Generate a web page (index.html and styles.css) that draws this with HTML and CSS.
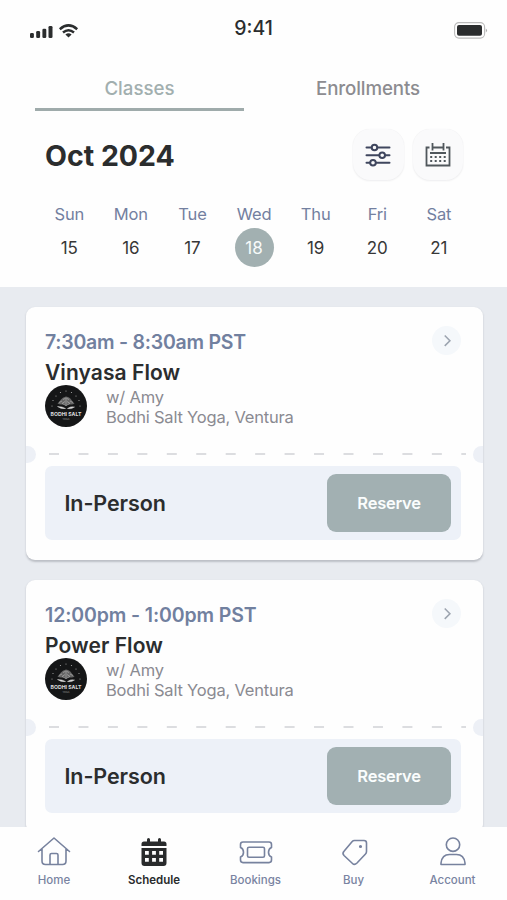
FILE: index.html
```html
<!DOCTYPE html>
<html lang="en">
<head>
<meta charset="utf-8">
<title>Schedule</title>
<link rel="stylesheet" href="styles.css">
</head>
<body>
<svg class="defs" width="0" height="0" aria-hidden="true">
  <symbol id="tree" viewBox="0 0 42 42">
    <g fill="#aaa">
      <circle cx="7" cy="21" r=".6"/><circle cx="8" cy="15.500" r=".6"/><circle cx="11" cy="11" r=".6"/><circle cx="15.500" cy="7.500" r=".6"/><circle cx="21" cy="6" r=".6"/><circle cx="26.500" cy="7.500" r=".6"/><circle cx="31" cy="11" r=".6"/><circle cx="34" cy="15.500" r=".6"/><circle cx="35" cy="21" r=".6"/>
    </g>
    <path d="M12.500 18.500q2-2 3-3.500 2-3 5.500-3.500 4 .5 5.500 3.500 1 1.500 3 3.500-2 1.500-5 .7-3 1-6.500 0-3 1-5.500-.7z" fill="#666"/>
    <path d="M14 17.500l3-1.500m0 2.500l3-2m-2-2l3-1.500 3 1.500m-2 2l3 2m0-2.500l3 1.500M21 14v7m-4-2.500l4 2 4-2" fill="none" stroke="#aaa" stroke-width=".7"/>
    <path d="M12.500 21.500q5 0 8 2-4 1-8-2zM29.500 22q-4-1-7 1.500 4 1 7-1.500z" fill="#ddd" stroke="#ccc" stroke-width=".5"/>
  </symbol>
  <symbol id="chevron" viewBox="0 0 28 28"><path d="M12.300 9.200l5 5-5 5" fill="none" stroke="#9da5b0" stroke-width="1.500"/></symbol>
</svg>
<div class="app">
  <header class="status">
    <div class="signal">
      <svg width="24" height="14" viewBox="0 0 24 14" fill="#2b2d2e"><rect x="0" y="9" width="3.900" height="5" rx="1.300"/><rect x="6.200" y="7" width="3.900" height="7" rx="1.300"/><rect x="12.400" y="4.700" width="3.900" height="9.300" rx="1.300"/><rect x="18.500" y="2" width="4" height="12" rx="1.300"/></svg>
      <svg width="20" height="14" viewBox="0 0 20 14"><path d="M.8 5.200Q9.500-2.400 18.200 5.200M4 8.500q5.500-4.600 11 0" fill="none" stroke="#2b2d2e" stroke-width="2.500"/><path d="M6.400 10.500q3.100-2.400 6.200 0L9.500 13.600z" fill="#2b2d2e"/></svg>
    </div>
    <div class="clock">9:41</div>
    <svg class="battery" width="34" height="17" viewBox="0 0 34 17"><rect x=".6" y=".6" width="30" height="15.500" rx="4.300" fill="#fff" stroke="#bbb" stroke-width="1.100"/><rect x="3" y="3" width="25" height="10.800" rx="2" fill="#2b2d2e"/><path d="M31.800 6.500q2.500 1.900 0 4z" fill="#aaa"/></svg>
  </header>
  <nav class="tabs"><div class="tab active">Classes</div><div class="tab">Enrollments</div></nav>
  <div class="month">
    <h1>Oct 2024</h1>
    <button class="tool" aria-label="Filter"><svg width="26" height="26" viewBox="0 0 26 26" fill="none" stroke="#3f465e" stroke-width="2" stroke-linecap="round"><path d="M1.500 5.500h5m6 0h12M1.500 13.200h12.500m6 0h4.500M1.500 20.800h3.500m6 0h13.500"/><circle cx="9.500" cy="5.500" r="2.800"/><circle cx="17.200" cy="13.200" r="2.800"/><circle cx="8" cy="20.800" r="2.800"/></svg></button>
    <button class="tool" aria-label="Calendar"><svg width="26" height="26" viewBox="0 0 26 26" fill="none" stroke="#50575c"><path d="M4.500 5.500H1.500v18h23V5.500h-3.500M7.500 5.500h11" stroke-width="1.800"/><path d="M7.500 1v7.500m11-7.500v7.500M5 11h16" stroke-width="1.800"/><path d="M5.200 15h16M5.200 19h16" stroke-width="2" stroke-dasharray="2 2.500"/></svg></button>
  </div>
  <div class="week">
    <div class="day"><span>Sun</span><b>15</b></div><div class="day"><span>Mon</span><b>16</b></div><div class="day"><span>Tue</span><b>17</b></div><div class="day selected"><span>Wed</span><b>18</b></div><div class="day"><span>Thu</span><b>19</b></div><div class="day"><span>Fri</span><b>20</b></div><div class="day"><span>Sat</span><b>21</b></div>
  </div>
  <main class="list">
    <article class="card">
      <div class="top"><div class="time long">7:30am - 8:30am PST</div><svg class="more" width="29" height="29"><use href="#chevron"/></svg></div>
      <h2>Vinyasa Flow</h2>
      <div class="host"><div class="avatar"><svg width="42" height="42"><use href="#tree"/><text x="21" y="31" class="brand">BODHI SALT</text><text x="21" y="35" class="sub">YOGA</text></svg></div><div class="meta"><p>w/ Amy</p><p>Bodhi Salt Yoga, Ventura</p></div></div>
      <div class="tear"><i></i><svg width="423" height="2"><path d="M6 1H423" stroke="#dcdde0" stroke-width="2" stroke-dasharray="10 19.450"/></svg><i></i></div>
      <div class="book"><strong>In-Person</strong><button>Reserve</button></div>
    </article>
    <article class="card">
      <div class="top"><div class="time">12:00pm - 1:00pm PST</div><svg class="more" width="29" height="29"><use href="#chevron"/></svg></div>
      <h2>Power Flow</h2>
      <div class="host"><div class="avatar"><svg width="42" height="42"><use href="#tree"/><text x="21" y="31" class="brand">BODHI SALT</text><text x="21" y="35" class="sub">YOGA</text></svg></div><div class="meta"><p>w/ Amy</p><p>Bodhi Salt Yoga, Ventura</p></div></div>
      <div class="tear"><i></i><svg width="423" height="2"><path d="M6 1H423" stroke="#dcdde0" stroke-width="2" stroke-dasharray="10 19.450"/></svg><i></i></div>
      <div class="book"><strong>In-Person</strong><button>Reserve</button></div>
    </article>
  </main>
  <nav class="bottom">
    <a><svg viewBox="0 0 34 32"><path d="M1.500 15.500L17 2l15.500 13.500M5 13v12q0 3.500 3.500 3.500h17q3.500 0 3.500-3.500V13M13 28.500V19q0-1.500 1.500-1.500h5q1.500 0 1.500 1.500v9.500"/></svg><span>Home</span></a>
    <a class="on"><svg viewBox="0 0 34 32"><path d="M4.500 10V8Q4.500 5.500 7 5.500H10V3.500q0-1.500 1.500-1.500T13 3.500V5.500h8V3.500Q21 2 22.500 2T24 3.500V5.500h3Q29.500 5.500 29.500 8V10z"/><path fill-rule="evenodd" d="M4.500 12h25v15q0 3-3 3H7.500q-3 0-3-3zM8 15v3.800H11.800V15zm7.100 0v3.800H18.900V15zm7.100 0v3.800H26V15zm-14.200 7v3.800H11.800V22zm7.100 0v3.800H18.900V22zm7.100 0v3.800H26V22z"/></svg><span>Schedule</span></a>
    <a><svg viewBox="0 0 34 32"><path d="M4 6h26q2.500 0 2.500 2.500v3q-3 1.200-3 4.800t3 4.800v3q0 2.500-2.500 2.500H4q-2.500 0-2.500-2.500v-3q3-1.200 3-4.800t-3-4.800v-3Q1.500 6 4 6z"/><rect x="8.500" y="11.300" width="17" height="10" rx="1.500"/></svg><span>Bookings</span></a>
    <a><svg viewBox="0 0 34 32"><path d="M17.500 4.500h9.500Q29.500 4.500 29.500 7v8.500q0 1.500-1 2.500l-8.500 9q-2.500 2.500-4.500 .5l-8.500-8q-2-2 0-4.200L15 5.700q1-1.200 2.500-1.200z"/><circle cx="23.500" cy="10.500" r=".8"/></svg><span>Buy</span></a>
    <a><svg viewBox="0 0 34 32"><circle cx="17" cy="8.700" r="6.700"/><path d="M5 28.500v-1.500q1-8.500 8.500-8.500h7q7.500 0 8.500 8.500v1.500z"/></svg><span>Account</span></a>
  </nav>
</div>
</body>
</html>
```

FILE: styles.css
```css
* { box-sizing: border-box; margin: 0; padding: 0; }
body { width: 507px; height: 900px; overflow: hidden; font-family: Inter, "Liberation Sans", sans-serif; color: #2b2d2e; background: #fdfefe; }
button { border: 0; font: inherit; }
svg { display: block; flex: none; }
.defs { position: absolute; }
.app { width: 507px; height: 900px; display: flex; flex-direction: column; background: #fefefe; }
.app > * { flex: none; }
.status { height: 60px; padding: 0 20px 0 30px; display: grid; grid-template-columns: 1fr auto 1fr; align-items: start; }
.signal { display: flex; gap: 5px; padding-top: 24px; }
.clock { font-size: 19.500px; font-weight: 500; line-height: 24px; padding-top: 16px; margin-right: 10px; }
.battery { justify-self: end; margin: 22px -1px 0 0; }
.tabs { height: 51px; padding: 0 35px; display: grid; grid-template-columns: 209px 1fr; }
.tab { height: 51px; font-size: 18.700px; font-weight: 500; line-height: 58px; text-align: center; color: #8c8c90; letter-spacing: -.12px; }
.tab + .tab { padding-left: 20px; }
.tab.active { color: #a2afaf; border-bottom: 3.500px solid #9fabab; letter-spacing: 0; }
.month { height: 87px; padding: 0 44px 0 45px; display: flex; align-items: center; gap: 9px; }
.month h1 { flex: 1; font-size: 28.500px; line-height: 34px; font-weight: 700; padding-top: 2px; }
.tool { width: 50.500px; height: 50.500px; border-radius: 17px; background: #fafafb; box-shadow: 0 0 1px #ececee, 0 1px 2px #eeeeef; display: grid; place-items: center; }
.week { height: 89px; padding: 0 38.500px; display: grid; grid-template-columns: repeat(7, 61.600px); }
.day { display: flex; flex-direction: column; align-items: center; font-size: 16.500px; color: #7380a0; padding-top: 4px; }
.day span { line-height: 24px; letter-spacing: -.15px; }
.day b { font-size: 17px; font-weight: 400; color: #373737; width: 39px; height: 39px; border-radius: 50%; line-height: 41px; margin-top: 2px; text-align: center; }
.day.selected b { background: #a2b0b1; color: #f7fafa; }
.list { height: 540px; background: #e8ebf0; padding: 20px 24.500px 0 25.500px; display: flex; flex-direction: column; gap: 20px; overflow: hidden; }
.card { height: 253px; flex: none; background: #fefefe; border-radius: 9px; box-shadow: 0 1.500px 2px rgba(75,80,90,.28); padding: 19px 22px 20px 19.500px; }
.top { display: flex; justify-content: space-between; height: 32px; }
.time { font-size: 19.500px; line-height: 32px; font-weight: 600; color: #71809f; letter-spacing: -.12px; }
.time.long { letter-spacing: -.24px; }
.more { background: #f5f8fb; border-radius: 50%; }
h2 { font-size: 21px; line-height: 29px; height: 27px; font-weight: 600; letter-spacing: .08px; }
.host { display: flex; height: 58px; gap: 19px; }
.avatar { width: 42px; height: 42px; border-radius: 50%; background: #151617; }
.brand { font: 700 5.200px Inter, sans-serif; fill: #ddd; text-anchor: middle; }
.sub { font: 500 2.500px Inter, sans-serif; fill: #888; text-anchor: middle; }
.meta { font-size: 16.500px; line-height: 20px; color: #8a8a91; padding-top: 2px; letter-spacing: -.2px; }
.tear { margin: 2px -22px 3px -19.500px; height: 18px; display: flex; justify-content: space-between; align-items: center; overflow: hidden; }
.tear i { width: 10px; height: 17px; background: #edf0f6; border-radius: 0 9px 9px 0; }
.tear i:last-child { border-radius: 9px 0 0 9px; }
.book { height: 74px; background: #edf1f8; border-radius: 7px; padding: 0 9.500px 0 19.500px; display: flex; align-items: center; justify-content: space-between; }
.book strong { font-size: 21.500px; font-weight: 600; letter-spacing: -.1px; }
.book button { width: 124px; height: 57.500px; border-radius: 9px; background: #a2b0b2; color: #fafdfd; font-size: 16.500px; font-weight: 600; letter-spacing: -.25px; }
.bottom { height: 73px; padding: 4px 5px 0; background: #fefefe; display: grid; grid-template-columns: 98px 102px 101px 95px 103px; }
.bottom a { display: flex; flex-direction: column; align-items: center; gap: 3px; color: #7983a1; font-size: 11.500px; font-weight: 500; line-height: 18px; padding-top: 5px; }
.bottom svg { width: 34px; height: 32px; fill: none; stroke: #77829e; stroke-width: 1.600; stroke-linejoin: round; stroke-linecap: round; }
.bottom .on { color: #292b2c; font-weight: 600; }
.bottom .on svg { fill: #292b2c; stroke: none; }
```
